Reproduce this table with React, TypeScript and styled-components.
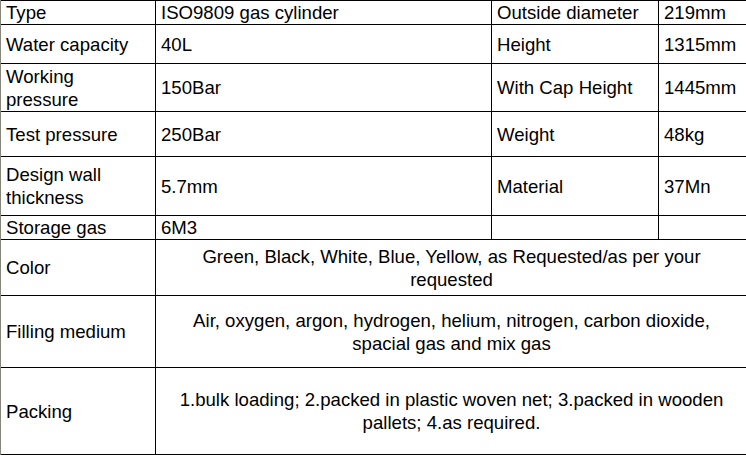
import styled, { createGlobalStyle } from 'styled-components';

const GlobalStyle = createGlobalStyle`
	html, body {
		margin: 0;
		padding: 0;
		background: #ffffff;
		overflow: hidden;
	}
`;

const Sheet = styled.div`
	display: grid;
	grid-template-columns: 154px 335px 166px 87px;
	grid-template-rows: 23px 38px 47px 44px 58px 23px 55px 71px 86px;
	gap: 1px;
	width: max-content;
	background: #000000;
	border-left: 1px solid #85857a;
	padding: 1px 1px 1px 0;
	font-family: 'Liberation Sans', Arial, sans-serif;
	font-size: 18.6px;
	line-height: 23px;
	color: #000000;
`;

const Cell = styled.div<{ $span?: number; $center?: boolean }>`
	grid-column: span ${(props) => props.$span ?? 1};
	background: #ffffff;
	display: flex;
	align-items: center;
	justify-content: ${(props) => (props.$center ? 'center' : 'flex-start')};
	text-align: ${(props) => (props.$center ? 'center' : 'left')};
	padding: 0 4px 0 5px;
	white-space: nowrap;
	overflow: hidden;
`;

type Pair = [string, string, string, string];

const specRows: Pair[] = [
	['Type', 'ISO9809 gas cylinder', 'Outside diameter', '219mm'],
	['Water capacity', '40L', 'Height', '1315mm'],
	['Working\npressure', '150Bar', 'With Cap Height', '1445mm'],
	['Test pressure', '250Bar', 'Weight', '48kg'],
	['Design wall\nthickness', '5.7mm', 'Material', '37Mn'],
	['Storage gas', '6M3', '', '']
];

const wideRows: [string, string[]][] = [
	[
		'Color',
		['Green, Black, White, Blue, Yellow, as Requested/as per your', 'requested']
	],
	[
		'Filling medium',
		[
			'Air, oxygen, argon, hydrogen, helium, nitrogen, carbon dioxide,',
			'spacial gas and mix gas'
		]
	],
	[
		'Packing',
		[
			'1.bulk loading; 2.packed in plastic woven net; 3.packed in wooden',
			'pallets; 4.as required.'
		]
	]
];

const Lines = ({ text }: { text: string }) => (
	<span>
		{text.split('\n').map((line, i) => (
			<span key={i}>
				{i > 0 && <br />}
				{line}
			</span>
		))}
	</span>
);

const App = () => {
	return (
		<>
			<GlobalStyle />
			<Sheet>
				{specRows.map((row) =>
					row.map((value, i) => (
						<Cell key={`${row[0]}-${i}`}>
							<Lines text={value} />
						</Cell>
					))
				)}
				{wideRows.map(([label, lines]) => [
					<Cell key={label}>{label}</Cell>,
					<Cell key={`${label}-value`} $span={3} $center>
						<span>
							{lines[0]}
							<br />
							{lines[1]}
						</span>
					</Cell>
				])}
			</Sheet>
		</>
	);
};

export default App;
